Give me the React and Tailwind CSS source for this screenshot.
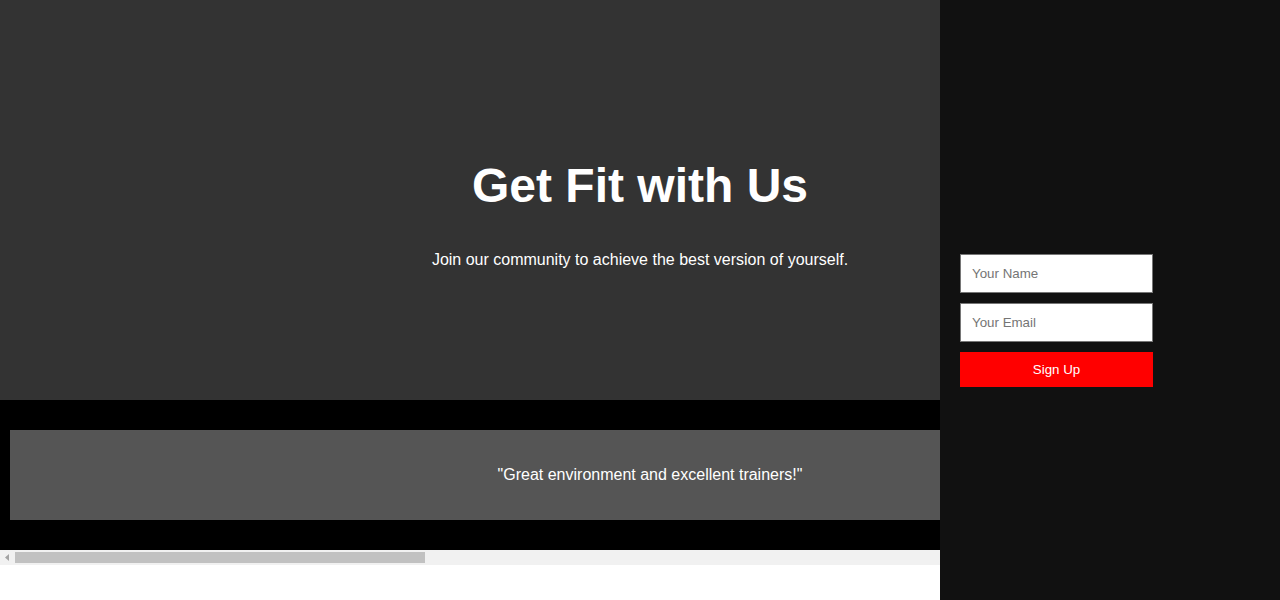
export default function App() {
  const testimonials = [
    '"Great environment and excellent trainers!"',
    '"The best gym I have ever joined."',
    '"Friendly staff and top-notch equipment!"',
  ];
  return (
    <div className="relative min-h-[600px] bg-white" style={{ fontFamily: '"Liberation Sans", Arial, sans-serif' }}>
      <section className="flex h-[400px] flex-col items-center justify-center bg-[#333333] pt-[26px] text-white">
        <h1 className="text-[48px] font-bold leading-[55px]">Get Fit with Us</h1>
        <p className="mt-[38px] text-[16px] leading-[18px]">
          Join our community to achieve the best version of yourself.
        </p>
      </section>
      <div>
        <section className="flex overflow-hidden bg-black py-[30px]">
          {testimonials.map((t) => (
            <div
              key={t}
              className="mx-[10px] flex h-[90px] w-[1280px] shrink-0 items-center justify-center bg-[#555555] text-[16px] text-white"
            >
              {t}
            </div>
          ))}
        </section>
        <div className="flex h-[15px] items-center bg-[#f1f1f1]">
          <div className="flex h-[15px] w-[15px] items-center justify-center">
            <svg width="15" height="15" viewBox="0 0 15 15">
              <path d="M5 7.5 L9 4 L9 11 Z" fill="#a3a3a3" />
            </svg>
          </div>
          <div className="h-[11px] w-[410px] bg-[#c1c1c1]" />
        </div>
      </div>
      <aside className="fixed right-0 top-0 flex h-[600px] w-[340px] flex-col bg-[#111111] px-[20px] pt-[254px]">
        <input
          type="text"
          placeholder="Your Name"
          className="h-[39px] w-[193px] border border-[#767676] bg-white px-[11px] text-[13.333px] text-black placeholder:text-[#757575]"
        />
        <input
          type="email"
          placeholder="Your Email"
          className="mt-[10px] h-[39px] w-[193px] border border-[#767676] bg-white px-[11px] text-[13.333px] text-black placeholder:text-[#757575]"
        />
        <button className="mt-[10px] h-[35px] w-[193px] bg-[#ff0000] text-[13.333px] text-white">Sign Up</button>
      </aside>
    </div>
  );
}
